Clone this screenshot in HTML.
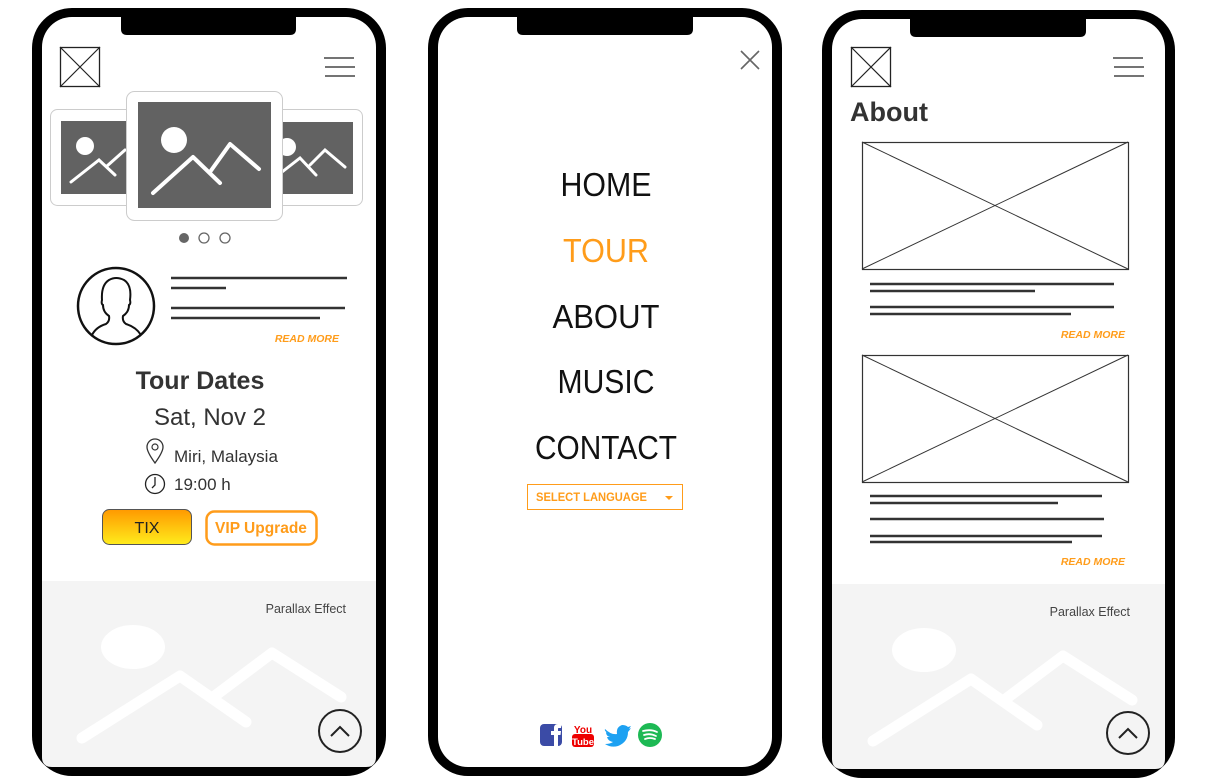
<!DOCTYPE html>
<html><head><meta charset="utf-8"><style>
html,body{margin:0;padding:0;background:#fff;width:1212px;height:783px;overflow:hidden}
svg{display:block}
text{font-family:"Liberation Sans",sans-serif}
</style></head><body>
<svg width="1212" height="783" viewBox="0 0 1212 783" xmlns="http://www.w3.org/2000/svg">
<defs>
<linearGradient id="g" x1="0" y1="0" x2="0" y2="1"><stop offset="0" stop-color="#ff9900"/><stop offset="1" stop-color="#ffec1c"/></linearGradient>
</defs>
<!-- Phone 1 -->
<rect x="32" y="8" width="354" height="768" rx="40" fill="#000"/>
<rect x="42" y="17" width="334" height="750" rx="30" fill="#fff"/>
<path d="M121 17H296V29Q296 35 290 35H127Q121 35 121 29Z" fill="#000"/>
<rect x="60.5" y="47.5" width="39" height="39" fill="none" stroke="#222" stroke-width="1.3"/>
<path d="M60 47L100 87M100 47L60 87" stroke="#222" stroke-width="1.2"/>
<path d="M324 58H354M325 67H355M325 76H355" stroke="#222" stroke-width="1.3"/>
<rect x="50.5" y="109.5" width="90" height="96" rx="7" fill="#fff" stroke="#ccc"/>
<rect x="61" y="121" width="75" height="73" fill="#626262"/>
<circle cx="85" cy="146" r="9" fill="#fff"/>
<path d="M71 182L99 160L115 175M107 166L125 150" stroke="#fff" stroke-width="3" stroke-linecap="round" fill="none"/>
<rect x="270.5" y="109.5" width="92" height="96" rx="7" fill="#fff" stroke="#ccc"/>
<rect x="275" y="122" width="78" height="72" fill="#626262"/>
<circle cx="287" cy="147" r="9" fill="#fff"/>
<path d="M282 172L300 158L316 175M310 165L325 150L345 167" stroke="#fff" stroke-width="3" stroke-linecap="round" fill="none"/>
<rect x="126.5" y="91.5" width="156" height="129" rx="8" fill="#fff" stroke="#ccc"/>
<rect x="138" y="102" width="133" height="106" fill="#626262"/>
<circle cx="174" cy="140" r="13" fill="#fff"/>
<path d="M153 193L193 157L220 183M210 172L230 144L259 169" stroke="#fff" stroke-width="4" stroke-linecap="round" stroke-linejoin="round" fill="none"/>
<circle cx="184" cy="238" r="5" fill="#666"/>
<circle cx="204" cy="238" r="5" fill="#fff" stroke="#666" stroke-width="1.3"/>
<circle cx="225" cy="238" r="5" fill="#fff" stroke="#666" stroke-width="1.3"/>
<circle cx="116" cy="306" r="38" fill="#fff" stroke="#111" stroke-width="2.5"/>
<path d="M92 335Q96 327 106 324Q110 321 109 316Q103 312 103 305Q101 304 102 300Q101 285 109 280Q116 276 124 280Q132 285 130 300Q131 304 129 305Q129 312 123 316Q122 321 126 324Q136 327 141 335" fill="none" stroke="#111" stroke-width="2"/>
<path d="M171 278H347M171 288H226M171 308H345M171 318H320" stroke="#333" stroke-width="2.5"/>
<text x="339" y="342" text-anchor="end" font-size="10.5" font-weight="bold" font-style="italic" fill="#ff9c1a">READ MORE</text>
<text x="200" y="389" text-anchor="middle" font-size="25" font-weight="bold" fill="#333">Tour Dates</text>
<text x="210" y="425" text-anchor="middle" font-size="24" fill="#333">Sat, Nov 2</text>
<path d="M155 463Q147 452 147 447A8 8 0 0 1 163 447Q163 452 155 463Z" fill="none" stroke="#333" stroke-width="1.3"/>
<circle cx="155" cy="447" r="3" fill="none" stroke="#333" stroke-width="1.2"/>
<text x="174" y="462" font-size="17" fill="#333">Miri, Malaysia</text>
<circle cx="155" cy="484" r="9.5" fill="none" stroke="#222" stroke-width="1.3"/>
<path d="M155 477V485L152 488" fill="none" stroke="#222" stroke-width="1.3"/>
<text x="174" y="490" font-size="17" fill="#333">19:00 h</text>
<rect x="102.5" y="509.5" width="89" height="35" rx="7" fill="url(#g)" stroke="#555"/>
<text x="147" y="533" text-anchor="middle" font-size="16" fill="#222">TIX</text>
<rect x="206.5" y="511.5" width="110" height="33" rx="8" fill="#fff" stroke="#ff9c1a" stroke-width="2.5"/>
<text x="261" y="533" text-anchor="middle" font-size="15.5" font-weight="bold" fill="#ff9c1a">VIP Upgrade</text>
<path d="M42 581H376V757Q376 767 366 767H52Q42 767 42 757Z" fill="#f4f4f4"/>
<text x="346" y="613" text-anchor="end" font-size="12.5" fill="#444">Parallax Effect</text>
<ellipse cx="133" cy="647" rx="32" ry="22" fill="#fff"/>
<path d="M82 738L180 676L246 722M212 698L272 653L341 697" stroke="#fff" stroke-width="11" stroke-linecap="round" stroke-linejoin="round" fill="none"/>
<circle cx="340" cy="731" r="21" fill="none" stroke="#222" stroke-width="2"/>
<path d="M331 736L340 727L349 736" fill="none" stroke="#222" stroke-width="2"/>

<!-- Phone 2 -->
<rect x="428" y="8" width="354" height="768" rx="40" fill="#000"/>
<rect x="438" y="17" width="334" height="750" rx="30" fill="#fff"/>
<path d="M517 17H693V29Q693 35 687 35H523Q517 35 517 29Z" fill="#000"/>
<path d="M741 51L759 69M759 51L741 69" stroke="#666" stroke-width="1.6"/>
<text x="606" y="196" text-anchor="middle" font-size="33" fill="#111" textLength="91" lengthAdjust="spacingAndGlyphs">HOME</text>
<text x="606" y="262" text-anchor="middle" font-size="33" fill="#ff9c1a" textLength="86" lengthAdjust="spacingAndGlyphs">TOUR</text>
<text x="606" y="328" text-anchor="middle" font-size="33" fill="#111" textLength="107" lengthAdjust="spacingAndGlyphs">ABOUT</text>
<text x="606" y="393" text-anchor="middle" font-size="33" fill="#111" textLength="97" lengthAdjust="spacingAndGlyphs">MUSIC</text>
<text x="606" y="459" text-anchor="middle" font-size="33" fill="#111" textLength="142" lengthAdjust="spacingAndGlyphs">CONTACT</text>
<rect x="527.5" y="484.5" width="155" height="25" fill="#fff" stroke="#ff9c1a"/>
<text x="536" y="501" font-size="11.5" font-weight="bold" fill="#ff9c1a" textLength="111" lengthAdjust="spacingAndGlyphs">SELECT LANGUAGE</text>
<path d="M665 496H673L669 500Z" fill="#ff9c1a"/>
<rect x="540" y="724" width="22" height="22" rx="4" fill="#3b4ba6"/>
<path d="M554 746V735H551V731H554V728Q554 724 558 724H561V728H558.5Q558 728 558 729V731H561L560.5 735H558V746Z" fill="#fff"/>
<text x="583" y="733" text-anchor="middle" font-size="10" font-weight="bold" fill="#e00">You</text>
<rect x="572" y="734" width="22" height="13" rx="3" fill="#e00"/>
<text x="583" y="745" text-anchor="middle" font-size="9.5" font-weight="bold" fill="#fff">Tube</text>
<path d="M605 729Q611 735 617 734Q616 727 622 725Q626 725 628 727L631 726L629 729L631 728Q629 731 628 732Q628 742 618 746Q611 748 605 744Q610 744 613 742Q608 741 607 737H610Q606 736 606 732L608 733Q604 731 605 729Z" fill="#1da1f2"/>
<circle cx="650" cy="735" r="12" fill="#1db954"/>
<path d="M643 731Q651 729 657 732M644 735Q650 733 656 736M645 739Q650 737 655 739" stroke="#fff" stroke-width="1.8" stroke-linecap="round" fill="none"/>

<!-- Phone 3 -->
<rect x="822" y="10" width="353" height="768" rx="40" fill="#000"/>
<rect x="832" y="19" width="333" height="750" rx="30" fill="#fff"/>
<path d="M910 19H1086V31Q1086 37 1080 37H916Q910 37 910 31Z" fill="#000"/>
<rect x="851.5" y="47.5" width="39" height="39" fill="none" stroke="#222" stroke-width="1.3"/>
<path d="M851 47L891 87M891 47L851 87" stroke="#222" stroke-width="1.2"/>
<path d="M1113 58H1143M1114 67H1144M1114 76H1144" stroke="#222" stroke-width="1.3"/>
<text x="850" y="121" font-size="27" font-weight="bold" fill="#333">About</text>
<rect x="862.5" y="142.5" width="266" height="127" fill="#fff" stroke="#333" stroke-width="1.2"/>
<path d="M862 142L1128 269M1128 142L862 269" stroke="#333" stroke-width="1"/>
<path d="M870 284H1114M870 291H1035M870 307H1114M870 314H1071" stroke="#333" stroke-width="2.5"/>
<text x="1125" y="338" text-anchor="end" font-size="10.5" font-weight="bold" font-style="italic" fill="#ff9c1a">READ MORE</text>
<rect x="862.5" y="355.5" width="266" height="127" fill="#fff" stroke="#333" stroke-width="1.2"/>
<path d="M862 355L1128 482M1128 355L862 482" stroke="#333" stroke-width="1"/>
<path d="M870 496H1102M870 503H1058M870 519H1104M870 536H1102M870 542H1072" stroke="#333" stroke-width="2.5"/>
<text x="1125" y="565" text-anchor="end" font-size="10.5" font-weight="bold" font-style="italic" fill="#ff9c1a">READ MORE</text>
<path d="M832 584H1165V759Q1165 769 1155 769H842Q832 769 832 759Z" fill="#f4f4f4"/>
<text x="1130" y="616" text-anchor="end" font-size="12.5" fill="#444">Parallax Effect</text>
<ellipse cx="924" cy="650" rx="32" ry="22" fill="#fff"/>
<path d="M873 741L971 679L1037 725M1003 701L1063 656L1132 700" stroke="#fff" stroke-width="11" stroke-linecap="round" stroke-linejoin="round" fill="none"/>
<circle cx="1128" cy="733" r="21" fill="none" stroke="#222" stroke-width="2"/>
<path d="M1119 738L1128 729L1137 738" fill="none" stroke="#222" stroke-width="2"/>
</svg>
</body></html>
